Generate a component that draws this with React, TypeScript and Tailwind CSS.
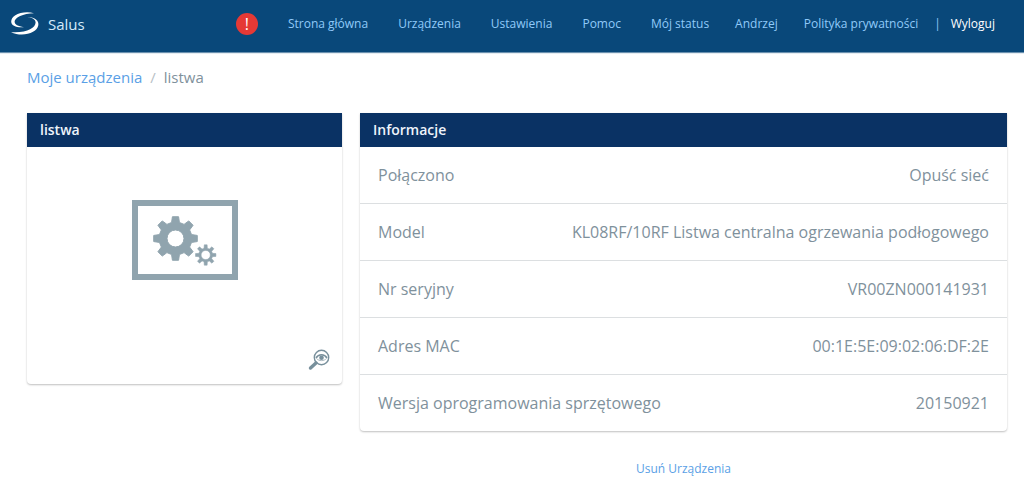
type NavItem = {
  label: string;
  className: string;
};

type InfoRow = {
  label: string;
  value: string;
};

const navItems: NavItem[] = [
  { label: "Strona główna", className: "mr-[30px]" },
  { label: "Urządzenia", className: "mr-[30px]" },
  { label: "Ustawienia", className: "mr-[30px]" },
  { label: "Pomoc", className: "mr-[30px]" },
  { label: "Mój status", className: "mr-[26px]" },
  { label: "Andrzej", className: "mr-[26px]" },
  { label: "Polityka prywatności", className: "mr-4" },
];

const infoRows: InfoRow[] = [
  { label: "Połączono", value: "Opuść sieć" },
  { label: "Model", value: "KL08RF/10RF Listwa centralna ogrzewania podłogowego" },
  { label: "Nr seryjny", value: "VR00ZN000141931" },
  { label: "Adres MAC", value: "00:1E:5E:09:02:06:DF:2E" },
  { label: "Wersja oprogramowania sprzętowego", value: "20150921" },
];

// Eight-toothed gear outline with a round hole, filled with the evenodd rule.
function gearPath(cx: number, cy: number, outer: number, root: number, hole: number) {
  const teeth = 8;
  const points: string[] = [];
  for (let i = 0; i < teeth; i++) {
    const mid = (i * 2 * Math.PI) / teeth;
    const corners: [number, number][] = [
      [root, -0.24],
      [outer, -0.14],
      [outer, 0.14],
      [root, 0.24],
    ];
    for (const [r, offset] of corners) {
      const x = cx + r * Math.cos(mid + offset);
      const y = cy + r * Math.sin(mid + offset);
      points.push(`${x.toFixed(2)} ${y.toFixed(2)}`);
    }
  }
  const circle = `M${cx - hole} ${cy}a${hole} ${hole} 0 1 0 ${hole * 2} 0a${hole} ${hole} 0 1 0 ${-hole * 2} 0Z`;
  return `M${points.join("L")}Z${circle}`;
}

function SalusLogo() {
  return (
    <svg width="30" height="26" viewBox="0 0 30 26" fill="#fff" aria-hidden="true">
      <path d="M24 2.200C18 .4 10 1.200 5 4.400C.5 7.400-.2 12.400 4 14.800C6.500 16.200 10 16.600 14 16.200C8 15.400 4.800 13.600 4.600 10.800C4.500 6.500 13 2.400 24 2.200Z" />
      <path d="M17.500 6C22.800 6.600 25.600 8.600 25.600 11.600C25.600 17.200 16 22.400 1 21.200C8 24.400 17 24.200 23 20.800C29 17.200 30 11.600 26 8.400C24 6.800 21 5.800 17.500 6Z" />
    </svg>
  );
}

function WiringCenterIcon() {
  return (
    <svg width="106" height="80" viewBox="0 0 106 80" aria-hidden="true">
      <rect x="3" y="3" width="100" height="74" fill="none" stroke="#90a4ae" strokeWidth="6" />
      <g fill="#90a4ae" fillRule="evenodd" stroke="#90a4ae" strokeLinejoin="round">
        <path d={gearPath(43.5, 38.5, 22, 16.5, 8.5)} strokeWidth="1" />
        <path d={gearPath(73.7, 55, 10.3, 7, 4.6)} strokeWidth=".5" />
      </g>
    </svg>
  );
}

function InspectIcon() {
  return (
    <svg width="22" height="22" viewBox="0 0 22 22" fill="none" aria-hidden="true">
      <circle cx="13.500" cy="8.500" r="7.200" stroke="#78909c" strokeWidth="1.400" />
      <path d="M8 14L2.500 19" stroke="#78909c" strokeWidth="3.400" strokeLinecap="round" />
      <path d="M8 9C10.500 4.800 16.500 4.800 19 9" stroke="#78909c" strokeWidth="1.500" />
      <path d="M8.500 9.500C11 12.300 16 12.300 18.500 9.500" stroke="#a9b8bf" />
      <circle cx="13.500" cy="8.800" r="2.300" fill="#78909c" />
    </svg>
  );
}

export default function App() {
  return (
    <div className="min-h-screen bg-white font-['Open_Sans','Noto_Sans',sans-serif] text-[#7f919c]">
      <header className="flex h-[52px] items-center bg-[#09487a] pr-[29px] pb-1 pl-[10px] text-xs shadow-[0_1px_1px_rgba(9,72,122,0.6)]">
        <a href="#" className="flex items-center gap-2 text-[15px] leading-5 text-[#d6ebfb]">
          <SalusLogo />
          Salus
        </a>
        <nav className="ml-auto flex items-center whitespace-nowrap text-[#90caf9]">
          <button
            type="button"
            aria-label="!"
            className="mr-[30px] flex size-[22px] items-center justify-center rounded-full bg-[#e53935] text-base text-white"
          >
            !
          </button>
          {navItems.map((item) => (
            <a key={item.label} href="#" className={item.className}>
              {item.label}
            </a>
          ))}
          <span className="mr-[10px]">|</span>
          <a href="#" className="font-medium text-white">
            Wyloguj
          </a>
        </nav>
      </header>

      <main className="pr-[17px] pl-[27px]">
        <nav className="flex items-center pt-[13px] text-[15px] leading-6">
          <a href="#" className="text-[#5a9fe6]">
            Moje urządzenia
          </a>
          <span className="mx-2 text-[#b8c0c5]">/</span>
          <span>listwa</span>
        </nav>

        <div className="mt-6 grid grid-cols-[315fr_647fr] items-start gap-[18px]">
          <section className="rounded-b-sm shadow-[0_1px_2px_rgba(0,0,0,0.25)]">
            <h2 className="bg-[#0a3264] px-[13px] text-sm leading-[34px] font-semibold text-[#eef4fb]">
              listwa
            </h2>
            <div className="flex flex-col items-center pt-[53px] pb-[13px]">
              <WiringCenterIcon />
              <button type="button" aria-label="listwa" className="mt-[69px] mr-3 self-end">
                <InspectIcon />
              </button>
            </div>
          </section>

          <section>
            <div className="rounded-b-sm shadow-[0_1px_2px_rgba(0,0,0,0.25)]">
              <h2 className="bg-[#0a3264] px-[13px] text-sm leading-[34px] font-semibold text-[#eef4fb]">
                Informacje
              </h2>
              <table className="block w-full text-base">
                <tbody className="block">
                  {infoRows.map((row) => (
                    <tr
                      key={row.label}
                      className="flex min-h-[57px] items-center justify-between gap-4 border-b border-[#dcdfe1] px-[18px] last:min-h-[56px] last:border-b-0"
                    >
                      <th scope="row" className="text-left font-normal">
                        {row.label}
                      </th>
                      <td className="text-right">{row.value}</td>
                    </tr>
                  ))}
                </tbody>
              </table>
            </div>
            <div className="mt-7 text-center text-xs leading-5">
              <button type="button" className="text-[#5a9fe6]">
                Usuń Urządzenia
              </button>
            </div>
          </section>
        </div>
      </main>
    </div>
  );
}
